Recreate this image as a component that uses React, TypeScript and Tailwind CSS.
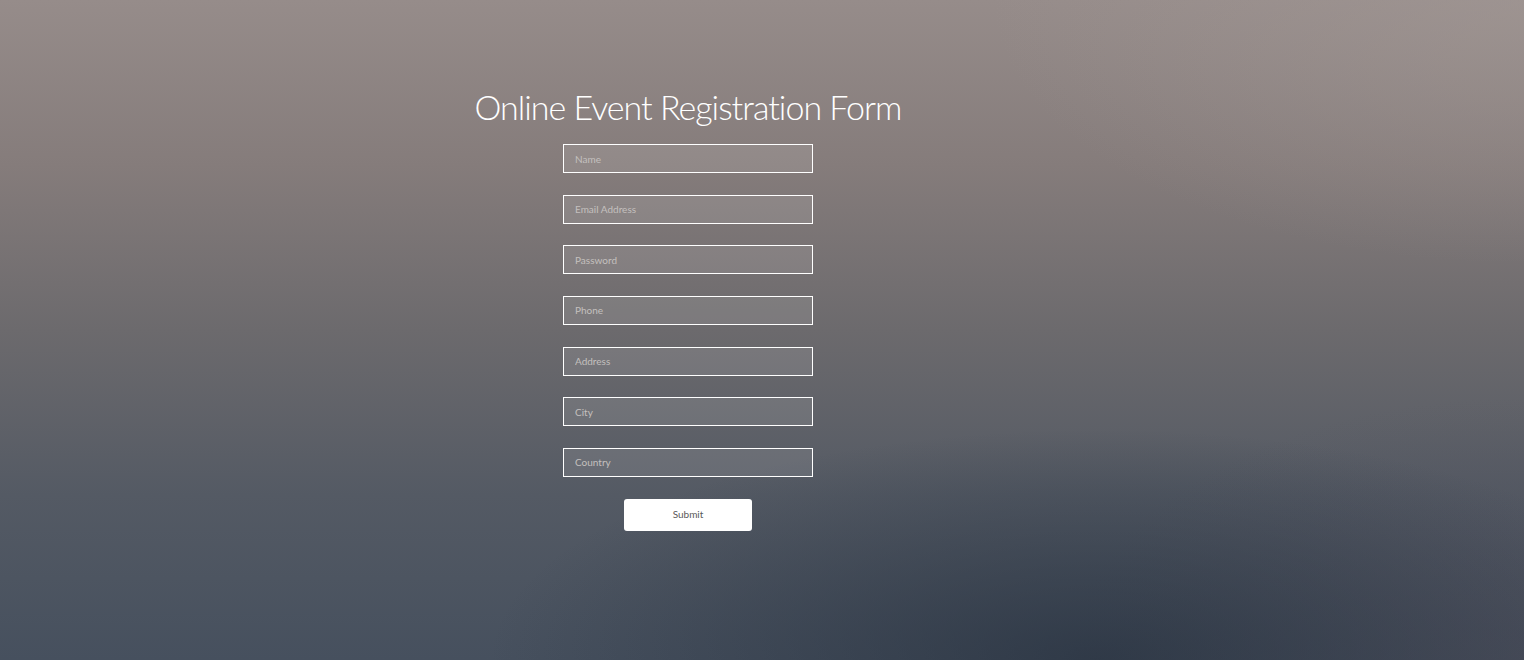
const fields = ["Name", "Email Address", "Password", "Phone", "Address", "City", "Country"];

export default function App() {
  return (
    <div className="relative h-[660px] w-full overflow-hidden bg-[linear-gradient(180deg,#968c8a_0%,#857c7b_25%,#6c6a6d_50%,#545a64_75%,#46505e_100%)] font-['Lato',sans-serif]">
      <div className="absolute inset-0 bg-[radial-gradient(ellipse_40%_35%_at_72%_100%,rgba(38,48,62,0.7),rgba(38,48,62,0)),radial-gradient(ellipse_35%_40%_at_100%_0%,rgba(165,155,152,0.5),rgba(165,155,152,0)),radial-gradient(ellipse_30%_40%_at_100%_100%,rgba(80,78,90,0.5),rgba(80,78,90,0))]" />
      <div className="relative flex w-[1376px] flex-col items-center pt-[84px]">
        <h1 className="text-[34px] font-light leading-[46px] tracking-[-1px] text-white">
          Online Event Registration Form
        </h1>
        <form className="mt-[14px] flex flex-col items-center gap-[21.67px]" onSubmit={(e) => e.preventDefault()}>
          {fields.map((f) => (
            <input
              key={f}
              type={f === "Password" ? "password" : "text"}
              placeholder={f}
              className="h-[29px] w-[250px] border border-white bg-white/10 px-[11px] text-[10px] text-white outline-none placeholder:text-[#c4c0bf]"
            />
          ))}
          <button
            type="submit"
            className="h-[32px] w-[128px] rounded-[3px] bg-white text-[10px] text-[#595959]"
          >
            Submit
          </button>
        </form>
      </div>
    </div>
  );
}
